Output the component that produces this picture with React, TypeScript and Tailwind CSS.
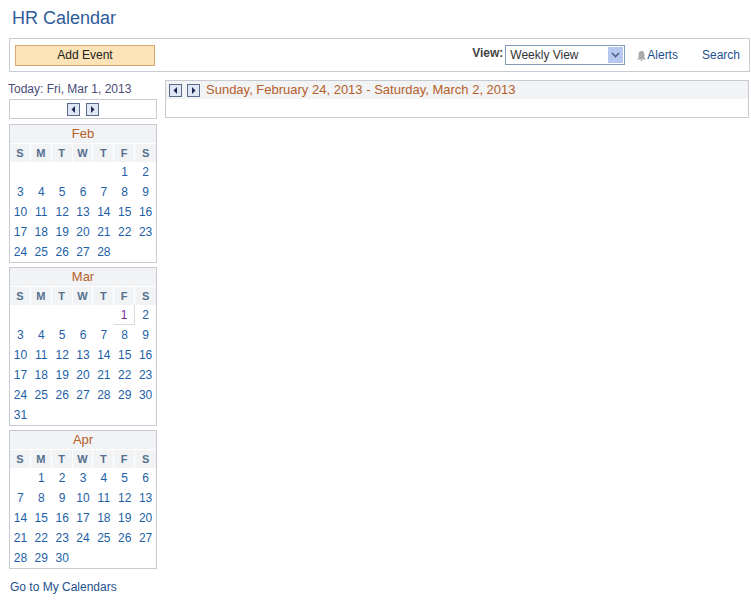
import React from "react";

const Arrow = ({ dir }: { dir: "l" | "r" }) => (
  <span className="inline-flex w-[13px] h-[13px] border border-[#5a6a8a] bg-[#dfe7f5] items-center justify-center">
    <svg width="7" height="9" viewBox="0 0 7 9">
      {dir === "l" ? <polygon points="5,1 1.5,4.5 5,8" fill="#1e2a55" /> : <polygon points="2,1 5.5,4.5 2,8" fill="#1e2a55" />}
    </svg>
  </span>
);

const Month = ({ name, start, days, today }: { name: string; start: number; days: number; today?: number }) => {
  const cells: (number | null)[] = [];
  for (let i = 0; i < start; i++) cells.push(null);
  for (let d = 1; d <= days; d++) cells.push(d);
  while (cells.length % 7) cells.push(null);
  const rows: (number | null)[][] = [];
  for (let i = 0; i < cells.length; i += 7) rows.push(cells.slice(i, i + 7));
  return (
    <div className="border border-[#c8ccd2] mb-[4px]">
      <div className="bg-[#f1f3f5] text-center text-[#b5602a] text-[13px] h-[18px] leading-[18px]">{name}</div>
      <div className="grid grid-cols-7 bg-[#f1f3f5]">
        {["S", "M", "T", "W", "T", "F", "S"].map((d, i) => (
          <div key={i} className={`text-center text-[11px] font-bold text-[#55708f] h-[19px] leading-[18px] border-t border-white ${i < 6 ? "border-r" : ""}`}>{d}</div>
        ))}
      </div>
      <div>
        {rows.map((r, ri) => (
          <div key={ri} className="grid grid-cols-7">
            {r.map((d, ci) => (
              <div key={ci} className={`text-center text-[12px] h-[20px] leading-[20px] ${d === today ? "text-[#7a2a9a] border-r border-b border-[#d8dbe0]" : "text-[#1d5fa8]"}`}>{d ?? ""}</div>
            ))}
          </div>
        ))}
      </div>
    </div>
  );
};

export default function App() {
  return (
    <div className="w-[751px] h-[600px] bg-white relative" style={{ fontFamily: "Arial, 'Liberation Sans', sans-serif" }}>
      <div className="pl-[12px] pt-[5px] text-[18px] text-[#2e5c9a] h-[38px]">HR Calendar</div>
      <div className="mx-[9px] w-[741px] h-[34px] border border-[#c8ccd2] flex items-center px-[5px]">
        <button className="w-[140px] h-[21px] bg-[#fde4b8] border border-[#d8a870] text-[12px] text-[#222]">Add Event</button>
        <div className="ml-auto flex items-center text-[12px]">
          <span className="font-bold text-[#444] mr-[2px] -mt-[4px]">View:</span>
          <div className="w-[120px] h-[20px] border border-[#7f9db9] flex items-center justify-between pl-[4px] text-[#333]">
            Weekly View
            <span className="w-[15px] h-[16px] mr-[1px] bg-[#b7c8f0] flex items-center justify-center">
              <svg width="9" height="6" viewBox="0 0 9 6"><polyline points="1,1 4.5,4.5 8,1" fill="none" stroke="#4d6185" strokeWidth="1.6" /></svg>
            </span>
          </div>
          <span className="ml-[11px] flex items-center text-[#1d4f8f]">
            <svg width="11" height="12" viewBox="0 0 11 12" className="mt-[1px]"><path d="M5.5 1 C3 1 2.5 3 2.5 5 L2.5 8 L1 9.5 L10 9.5 L8.5 8 L8.5 5 C8.5 3 8 1 5.5 1 Z M4.3 10 L6.7 10 L5.5 11.5 Z" fill="#aaa" /></svg>
            Alerts
          </span>
          <span className="ml-[24px] mr-[4px] text-[#1d4f8f]">Search</span>
        </div>
      </div>
      <div className="flex mt-[8px] ml-[9px]">
        <div className="w-[148px]">
          <div className="text-[12px] text-[#4c4c7a] h-[19px] leading-[19px] -ml-[1px]">Today: Fri, Mar 1, 2013</div>
          <div className="h-[20px] border border-[#c8ccd2] flex items-center justify-center gap-[6px] mb-[5px]"><Arrow dir="l" /><Arrow dir="r" /></div>
          <Month name="Feb" start={5} days={28} />
          <Month name="Mar" start={5} days={31} today={1} />
          <Month name="Apr" start={1} days={30} />
          <div className="text-[12px] text-[#1d4f8f] mt-[9px] ml-[1px]">Go to My Calendars</div>
        </div>
        <div className="ml-[8px] w-[584px] h-[38px] border border-[#c8ccd2] self-start">
          <div className="h-[18px] bg-[#f1f3f5] flex items-center gap-[5px] pl-[3px] text-[13px] text-[#b5602a]">
            <Arrow dir="l" /><Arrow dir="r" />
            <span className="ml-[1px]">Sunday, February 24, 2013 - Saturday, March 2, 2013</span>
          </div>
        </div>
      </div>
    </div>
  );
}
